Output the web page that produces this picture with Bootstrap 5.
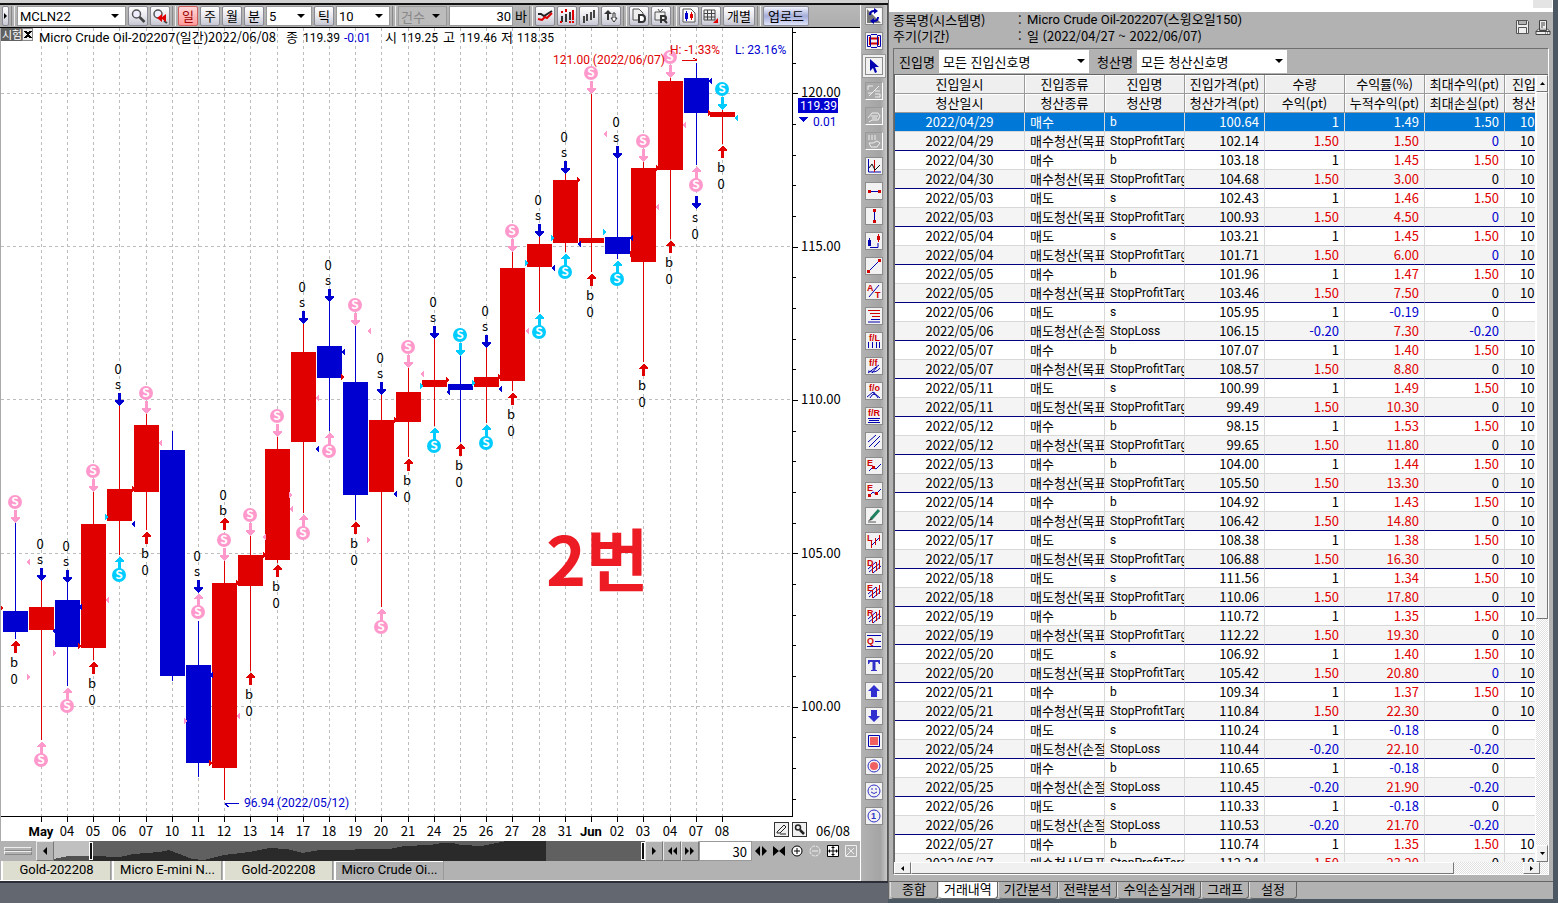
<!DOCTYPE html>
<html lang="ko">
<head>
<meta charset="utf-8">
<meta name="viewport" content="width=device-width, initial-scale=1">
<title>Micro Crude Oil-202207</title>
<link href="https://cdn.jsdelivr.net/npm/bootstrap@5.3.0/dist/css/bootstrap.min.css" rel="stylesheet">
<style>
:root { --face:#b2b2b2; --navy:#0000d0; --up:#e00000; }
body { font:13px/16px "Noto Sans CJK KR", sans-serif; color:#000; background:#636870; }
button, input, select { font:inherit; color:inherit; border-radius:0; }
.desk { display:grid; grid-template-columns:minmax(0,1fr) 670px; height:100vh; min-height:480px; overflow:hidden; }
.chart-win { background:var(--face); border-bottom:2px solid #2b2e36; margin-bottom:20px; min-height:0; }
.cap-edge { height:5px; background:#d0d0d0; border-bottom:2px solid #111; }
.toolbar { height:23px; gap:2px; padding:0 2px; border-bottom:1px solid #000; background:linear-gradient(#b8b8b8,#adadad); overflow:hidden; }
.tb { width:20px; height:20px; padding:0; border:1px solid #8a8a94; border-radius:2px; background:linear-gradient(#fff,#e8e8ee 50%,#c8c8d4); line-height:16px; display:flex; align-items:center; justify-content:center; flex:none; }
.tb.grip { width:7px; }
.tb.on { background:linear-gradient(#ffd8d8,#ff9a9a); border-color:#d06060; color:#a00000; }
.tb.wide { width:32px; }
.tb.upload { width:46px; background:linear-gradient(#f4f6ff,#a4acd8 50%,#dfe4fa); }
.sep { width:4px; height:20px; border-left:1px solid #888; border-right:1px solid #eee; flex:none; margin:0; }
.combo { appearance:none; height:20px; border:1px solid #999; padding:0 2px; line-height:17px; flex:none;
 background:#fff url("data:image/svg+xml,%3Csvg xmlns='http://www.w3.org/2000/svg' width='8' height='5'%3E%3Cpath d='M0 0h8l-4 4z'/%3E%3C/svg%3E") no-repeat right 6px center; }
.combo:disabled { background-color:#bcbcbc; color:#888; opacity:1; }
.latin { font-family:Roboto, "Noto Sans CJK KR", sans-serif; }
.num { height:20px; border:1px solid #999; padding:0 4px 0 2px; text-align:right; background:#fff; flex:none; min-width:0; }
.toolbar .num { padding-right:1px; }
.plot { border-left:1px solid #aaa; background:#fff; min-height:0; overflow:hidden; }
.plot svg { display:block; width:100%; height:100%; }
.plot .fig { font:12px Roboto, sans-serif; }
.plot .name { font:13px Roboto, "Noto Sans CJK KR", sans-serif; }
.navbar-mini { height:20px; flex:none; }
.grip-lines { width:36px; padding:6px 4px; }
.grip-lines i { display:block; height:4px; border:1px solid #eee; border-bottom-color:#888; border-right-color:#888; }
.nb { width:18px; height:20px; padding:0; border:1px solid #e8e8e8; border-right-color:#777; border-bottom-color:#777; background:var(--face); display:flex; align-items:center; justify-content:center; flex:none; }
.nb.flat { border:0; }
.charts { height:20px; flex:none; border-bottom:1px solid #fff; padding-left:1px; gap:1px; }
.charts a { width:110px; text-align:center; color:#000; text-decoration:none; background:#deded0; border-left:2px solid #fff; border-right:1px solid #999; line-height:18px; overflow:hidden; white-space:nowrap; }
.charts a.on { background:var(--face); box-shadow:inset 0 1px #fff; }
.strip { width:28px; flex:none; padding:2px 0 0 4px; gap:7px; border-left:1px solid #fff; border-right:1px solid #555; background:linear-gradient(90deg,#b2b2b2,#a4a4a4 75%,#c8c8c8); overflow:hidden; }
.strip button { width:18px; height:18px; padding:0; border:1px solid #707070; outline:1px solid #8c8c8c; outline-offset:-1px; background:#f2f2f2; display:block; flex:none; }
.strip button.off { background:#aaa; border-color:#999 #fff #fff #999; outline:0; }
.strip button.on { box-shadow:0 0 0 2px #f0f0f0, 0 0 0 3px #999; }
.strip svg { display:block; width:16px; height:16px; }
.strip text { font:bold 9px "Liberation Sans", sans-serif; }
.report { background:#4b5763; padding:0 5px 4px 0; min-height:0; }
.report-in { background:var(--face); min-height:0; border-left:1px solid #666; }
.title-strip { height:12px; background:#fff; flex:none; }
.title-strip span { width:19px; height:8px; margin-right:1px; background:#e4e4e4; }
.meta { padding:0 2px 4px 4px; flex:none; height:36px; }
.meta dl { display:grid; grid-template-columns:125px 9px 1fr; }
.meta dt, .meta dd { font-weight:400; margin:0; line-height:16px; white-space:nowrap; }
.frame { margin:0 4px 0 4px; border:1px solid; border-color:#707070 #fff #fff #707070; min-height:0; }
.filter { height:26px; padding:0 5px; flex:none; border-bottom:1px solid #666; }
.filter .combo { width:150px; height:23px; border:2px solid #fff; background-position:right 2px center; }
.filter label { width:40px; line-height:22px; white-space:nowrap; }
.grid-wrap { min-height:0; overflow:hidden; background:#fff; border-left:1px solid #666; }
.deals { width:640px; table-layout:fixed; border-collapse:separate; border-spacing:0; }
.deals th, .deals td { height:19px; padding:0 5px; line-height:18px; white-space:nowrap; overflow:hidden; border-right:1px solid #d8d8d8; border-bottom:1px solid #d8d8d8; }
.deals th { font-weight:400; text-align:center; padding:0; background:#efefef; border-color:#999; box-shadow:inset 1px 1px #fff; }
.deals th:last-child { text-align:left; padding-left:7px; }
.deals td:nth-child(n+4) { text-align:right; }
.deals td:first-child { text-align:center; padding:0; }
.deals td:nth-child(2) { padding-right:0; }
.deals td:nth-child(3) { padding-right:0; font-family:Roboto, sans-serif; font-size:12px; }
.deals td:last-child { text-align:left; padding:0 0 0 15px; }
.deals th:last-child, .deals td:last-child { border-right:0; }
.deals tr.exit td { background:#f4f4f4; border-bottom-color:#000080; }
.deals tr.sel td { background:#0078d7; color:#fff; }
.deals .r { color:#e00000; } .deals .l { color:#0000d0; }
.bar { background:repeating-conic-gradient(#fff 0 25%,#e0e0e0 0 50%) 0 0/2px 2px; flex:none; }
.bar.v { width:12px; } .bar.h { height:12px; }
.bar button, .bar .thumb { background:#f0f0f0; border:1px solid; border-color:#fff #777 #777 #fff; padding:0; flex:none; display:flex; align-items:center; justify-content:center; }
.bar.v button { height:17px; width:12px; } .bar.h button { width:17px; height:12px; }
.bar.v .thumb { height:67%; } .bar.h .thumb { width:83%; }
.sheets { height:18px; flex:none; margin-top:6px; padding-left:1px; border-top:1px solid #666; }
.sheets a { padding:0 5px; line-height:13px; height:17px; color:#000; text-decoration:none; border:1px solid #666; border-top:0; border-left-color:#ddd; border-radius:0 0 4px 4px; white-space:nowrap; text-align:center; }
.sheets a.short { padding:0 11px; }
.sheets a.on { background:#fff; }
</style>
</head>
<body>
<div class="desk">
 <div class="chart-win d-flex">
  <main class="d-flex flex-column flex-grow-1" style="min-width:0">
   <div class="cap-edge flex-shrink-0"></div>
   <div class="toolbar d-flex align-items-center flex-shrink-0">
    <button class="tb grip" aria-label="접기"><svg width="4" height="6"><path d="M0 0l3 3-3 3z"/></svg></button><i class="sep"></i>
    <select class="combo latin" style="width:109px" aria-label="종목"><option>MCLN22</option></select>
    <button class="tb" aria-label="검색"><svg width="16" height="16"><circle cx="6.500" cy="6" r="4" fill="#eef" stroke="#555" stroke-width="1.500"/><path d="M9.500 9l5 5" stroke="#444" stroke-width="2.500"/></svg></button>
    <button class="tb" aria-label="최근 검색"><svg width="16" height="16"><circle cx="6" cy="6" r="4" fill="#eef" stroke="#555" stroke-width="1.500"/><path d="M12 13l3 2" stroke="#444" stroke-width="2"/><path d="M5 10l5-4v3l4-3v8l-4-3v3z" fill="#e00000"/></svg></button><i class="sep"></i>
    <button class="tb on">일</button><button class="tb">주</button><button class="tb">월</button><button class="tb">분</button>
    <select class="combo latin" style="width:46px" aria-label="분 간격"><option>5</option></select>
    <button class="tb">틱</button>
    <select class="combo latin" style="width:54px" aria-label="틱 간격"><option>10</option></select><i class="sep"></i>
    <select class="combo" style="width:49px" disabled aria-label="건수"><option>건수</option></select>
    <input class="num latin" id="bars" style="width:64px" value="30"><label for="bars">바</label><i class="sep"></i>
    <button class="tb" aria-label="추세"><svg width="16" height="16" fill="none" stroke-width="2"><path d="M1 6h3l3 2 8-5" stroke="#222"/><path d="M1 11l4 1 3-3 2 1 5-5" stroke="#e00000"/></svg></button>
    <button class="tb" aria-label="캔들"><svg width="16" height="16" stroke-width="2"><path d="M3 8v6M7 6v8M11 4v8" stroke="#333"/><path d="M3 3v2M7 1v3M11 13v2M14 2v10M14 13v2M1 14h2" stroke="#e00000"/></svg></button>
    <button class="tb" aria-label="막대"><svg width="16" height="16" stroke-width="2"><path d="M3 8v7M6 6v7M10 4v8M13 2v8" stroke="#444"/></svg></button>
    <button class="tb" aria-label="정렬"><svg width="16" height="16"><path d="M1 6l4-4 4 4H6v6H4V6z" fill="#333"/><path d="M8 10h2V5h2v5h2l-3 4z" fill="#fff" stroke="#333"/></svg></button><i class="sep"></i>
    <button class="tb" aria-label="저장"><svg width="16" height="16"><path d="M2 1h6l4 4v7H2z" fill="#eee" stroke="#555"/><path d="M8 7h3q3 0 3 3.500T11 14H8z" fill="#fff" stroke="#333" stroke-width="2"/></svg></button>
    <button class="tb" aria-label="불러오기"><svg width="16" height="16"><path d="M2 4h10v8H2zM5 1l2 3 3-3" fill="#eee" stroke="#555"/><path d="M8 15V8h3q2 0 2 2t-2 2H8M11 12l3 3" fill="none" stroke="#333" stroke-width="2"/></svg></button><i class="sep"></i>
    <button class="tb" aria-label="차트 종류"><svg width="16" height="16"><path d="M2 1h8l4 4v9H2z" fill="#fff" stroke="#555"/><path d="M4 5h3v6H4zM5 3h1v10H5z" fill="#00c"/><path d="M9 6h3v4H9zM10 4h1v8h-1z" fill="#e00000"/></svg></button>
    <button class="tb" aria-label="표"><svg width="16" height="16"><path d="M1 2h11v10H1zM1 5.500h11M1 9h11M4.500 2v10M8.500 2v10" fill="none" stroke="#444"/><path d="M15 10v5h-5z" fill="#e00000"/></svg></button>
    <button class="tb wide">개별</button><i class="sep"></i><button class="tb upload">업로드</button>
   </div>
   <div class="plot flex-grow-1"><svg id="plot" viewBox="1 28 859 813" preserveAspectRatio="xMinYMin meet" role="img" aria-label="Micro Crude Oil-202207"></svg></div>
   <div class="navbar-mini d-flex">
    <div class="grip-lines"><i></i><i></i></div>
    <button class="nb" aria-label="이전"><svg width="6" height="8"><path d="M5 0v8L1 4z"/></svg></button>
    <svg class="flex-grow-1" style="min-width:0" height="20" viewBox="0 0 590 20" preserveAspectRatio="none" shape-rendering="crispEdges">
     <path fill="#606060" d="M0 0h590v20H0z"/>
     <path fill="#2a2a2a" d="M0 18l14-2 24-1 28 1 13-3 27-2 9-2 10 4 13 5 12 1 8-2 12-3 25-3 20-4 18 1 15 4 17-3 70-1 15-3 25-1 13-2h10l9 2 20 1 15-3 10-2h49v20H0z"/>
     <path fill="#606060" d="M491 0h95v20h-95z"/>
     <path fill="#c0c0c0" d="M0 0h36v15H14L0 18z"/><path fill="#505050" d="M14 15h22v5H0v-2z"/>
     <path fill="#111" stroke="#fff" d="M35.500 1.500h3v17h-3zM586.500 1.500h3v17h-3z"/>
    </svg>
    <button class="nb" aria-label="다음"><svg width="6" height="8"><path d="M1 0v8l4-4z"/></svg></button>
    <button class="nb" aria-label="뒤로"><svg width="10" height="8"><path d="M5 0v8L1 4zM10 0v8L6 4z"/></svg></button>
    <button class="nb" aria-label="앞으로"><svg width="10" height="8"><path d="M0 0v8l4-4zM5 0v8l4-4z"/></svg></button>
    <input class="num" style="width:53px" value="30" aria-label="봉 개수">
    <button class="nb flat" aria-label="넓게"><svg width="12" height="12"><path d="M5 1v10L0 6zM7 1v10l5-5z"/></svg></button>
    <button class="nb flat" aria-label="좁게"><svg width="12" height="12"><path d="M0 1v10l6-5zM12 1v10L6 6z"/></svg></button>
    <button class="nb flat" aria-label="확대"><svg width="12" height="12" fill="none" stroke="#000"><circle cx="6" cy="6" r="5" fill="#fff"/><path d="M3 6h6M6 3v6"/></svg></button>
    <button class="nb flat" aria-label="축소"><svg width="12" height="12" fill="none" stroke="#eee"><circle cx="6" cy="6" r="5" stroke-dasharray="3 1"/><path d="M3 6h6"/></svg></button>
    <button class="nb flat" aria-label="전체"><svg width="12" height="12" fill="none" stroke="#000"><path fill="#fff" d="M.5.5h11v11H.5z"/><path d="M1 6h10M6 1v10M4.500 2.500h3M4.500 9.500h3M2.500 4.500v3M9.500 4.500v3"/></svg></button>
    <button class="nb flat" aria-label="지우기"><svg width="12" height="12" fill="none" stroke="#eee"><path d="M.5.5h11v11H.5zM3 3l6 6M9 3l-8 8"/></svg></button>
   </div>
   <nav class="charts latin d-flex"><a href="#">Gold-202208</a><a href="#">Micro E-mini N...</a><a href="#">Gold-202208</a><a href="#" class="on">Micro Crude Oi...</a></nav>
  </main>
  <div class="d-flex flex-column flex-shrink-0"><div class="cap-edge"></div><div class="strip d-flex flex-column flex-grow-1" id="strip"></div></div>
 </div>

 <div class="report d-flex flex-column">
  <div class="report-in d-flex flex-column flex-grow-1">
   <div class="title-strip d-flex justify-content-end"><span></span></div>
   <div class="meta d-flex justify-content-between">
    <dl class="mb-0"><dt>종목명(시스템명)</dt><dd>:</dd><dd class="latin">Micro Crude Oil-202207(스윙오일150)</dd><dt>주기(기간)</dt><dd>:</dd><dd>일 (2022/04/27 ~ 2022/06/07)</dd></dl>
    <div class="d-flex gap-1 pt-2">
     <svg width="16" height="16" fill="#eee" stroke="#555"><path d="M1.500.5h11l1 1v12h-12zM3.500.5v4h8v-4M3.500 14V7.500h8V14"/></svg>
     <svg width="16" height="16" fill="#eee" stroke="#444"><path d="M4.500.5h7v10h-7zM6 3h4M6 5h4M6 7h2M4 8.500l-3 3v3h14v-3l-3-3M1 11.500h14M10 13h1M12 13h1"/></svg>
    </div>
   </div>
   <div class="frame d-flex flex-column flex-grow-1">
    <div class="filter d-flex align-items-center">
     <label for="in">진입명</label><select id="in" class="combo me-2"><option>모든 진입신호명</option></select>
     <label for="out">청산명</label><select id="out" class="combo"><option>모든 청산신호명</option></select>
    </div>
    <div class="d-flex flex-grow-1" style="min-height:0">
     <div class="grid-wrap flex-grow-1">
      <table class="deals">
       <colgroup><col style="width:130px"><col style="width:80px"><col style="width:80px"><col style="width:80px"><col style="width:80px"><col style="width:80px"><col style="width:80px"><col style="width:30px"></colgroup>
       <thead><tr><th>진입일시</th><th>진입종류</th><th>진입명</th><th>진입가격(pt)</th><th>수량</th><th>수익률(%)</th><th>최대수익(pt)</th><th>진입</th></tr>
       <tr><th>청산일시</th><th>청산종류</th><th>청산명</th><th>청산가격(pt)</th><th>수익(pt)</th><th>누적수익(pt)</th><th>최대손실(pt)</th><th>청산</th></tr></thead>
       <tbody id="rows"></tbody>
      </table>
     </div>
     <div class="bar v d-flex flex-column"><button aria-label="위로"><svg width="5" height="3"><path d="M0 3h5L2.500 0z"/></svg></button><div class="thumb"></div><button class="mt-auto" aria-label="아래로"><svg width="5" height="3"><path d="M0 0h5L2.500 3z"/></svg></button></div>
    </div>
    <div class="bar h d-flex"><button aria-label="왼쪽"><svg width="3" height="5"><path d="M3 0v5L0 2.500z"/></svg></button><div class="thumb"></div><button class="ms-auto me-2" aria-label="오른쪽"><svg width="3" height="5"><path d="M0 0v5l3-2.500z"/></svg></button></div>
   </div>
   <nav class="sheets d-flex"><a href="#" class="short">종합</a><a href="#" class="on">거래내역</a><a href="#">기간분석</a><a href="#">전략분석</a><a href="#">수익손실거래</a><a href="#">그래프</a><a href="#" class="short">설정</a></nav>
  </div>
 </div>
</div>

<script>
/* trade list: month/day, side, entry, exit, return %, cumulative, stopped out */
const deals = [
['04/29','b','100.64','102.14','1.49','1.50'],['04/30','b','103.18','104.68','1.45','3.00'],['05/03','s','102.43','100.93','1.46','4.50'],
['05/04','s','103.21','101.71','1.45','6.00'],['05/05','b','101.96','103.46','1.47','7.50'],['05/06','s','105.95','106.15','-0.19','7.30',1],
['05/07','b','107.07','108.57','1.40','8.80'],['05/11','s','100.99','99.49','1.49','10.30'],['05/12','b','98.15','99.65','1.53','11.80'],
['05/13','b','104.00','105.50','1.44','13.30'],['05/14','b','104.92','106.42','1.43','14.80'],['05/17','s','108.38','106.88','1.38','16.30'],
['05/18','s','111.56','110.06','1.34','17.80'],['05/19','b','110.72','112.22','1.35','19.30'],['05/20','s','106.92','105.42','1.40','20.80'],
['05/21','b','109.34','110.84','1.37','22.30'],['05/24','s','110.24','110.44','-0.18','22.10',1],['05/25','b','110.65','110.45','-0.18','21.90',1],
['05/26','s','110.33','110.53','-0.18','21.70',1],['05/27','b','110.74','112.24','1.35','23.20']];
const blueZero = ['04/29','05/03','05/04','05/20'];
document.getElementById('rows').innerHTML = deals.map(([d,s,a,z,r,c,stop],i) => {
  const side = s==='b' ? '매수' : '매도', t = stop ? '' : '10', tone = stop ? 'l' : 'r';
  return `<tr class="${i?'':'sel'}"><td>2022/${d}</td><td>${side}</td><td>${s}</td><td>${a}</td><td>1</td><td class="${i?tone:''}">${r}</td><td class="${i&&!stop?'r':''}">${stop?'0':'1.50'}</td><td>${t}</td></tr>`+
  `<tr class="exit"><td>2022/${d}</td><td>${side}청산(${stop?'손절':'목표'})</td><td>${stop?'StopLoss':'StopProfitTarget'}</td><td>${z}</td><td class="${tone}">${stop?'-0.20':'1.50'}</td><td class="r">${c}</td><td class="${stop||blueZero.includes(d)?'l':''}">${stop?'-0.20':'0'}</td><td>${t}</td></tr>`;
}).join('');

/* candles: x, unused, body top/bottom, high, low, label, signals, colour */
const R='#e00000', B='#0000d0', P='#ff99cc', C='#00ccff';
const candles = [
[15,1,611,632,523,639,'','PD502 RU641',B],[41,0,607,630,581,740,'May','BD580 PU760',R],[67,0,600,647,583,686,'04','BD582 PU706',B],
[93,0,524,648,492,660,'05','PD471 RU662',R],[119,0,489,521,406,555,'06','BD405 CU575',R],[146,0,425,492,414,530,'07','PD393 RU532',R],
[172,0,450,676,431,681,'10','',B],[198,0,665,763,621,777,'11','BD592 PU612',B],[224,0,583,768,561,800,'12','RT518 PD540',R],
[250,0,555,586,536,671,'13','PD515 RU673',R],[277,0,449,560,437,563,'14','PD416 RU565',R],[303,0,352,442,324,513,'17','BD323 PU533',R],
[329,0,346,378,302,431,'18','BD301 PU451',B],[355,0,382,495,326,520,'19','PD305 RU522',B],[381,0,420,492,395,607,'20','BD394 PU627',R],
[408,0,392,422,368,457,'21','PD347 RU459',R],[434,0,380,387,339,426,'24','BD338 CU446',R],[460,0,384,390,356,442,'25','CD335 RU444',B],
[486,0,377,387,348,423,'26','BD347 CU443',R],[512,0,268,381,252,391,'27','PD231 RU393',R],[539,0,244,267,237,312,'28','BD236 CU332',R],
[565,0,180,243,174,252,'31','BD173 CU272',R],[591,0,238,243,94,272,'Jun','PD73 RU274',R],[617,0,237,254,159,259,'02','BD158 CU279',B],
[643,0,168,262,162,362,'03','PD141 RU364',R],[670,0,81,170,78,239,'04','PD57 RU241',R],[696,0,78,113,63,165,'07','PU185 BB208',B],
[722,0,112,117,110,144,'08','CD89 RU146',R]];
const txt=(x,y,s,f='#000',a='start',e='')=>`<text x="${x}" y="${y}" fill="${f}" text-anchor="${a}" ${e}>${s}</text>`;
const fig=(x,y,s,f='#000')=>txt(x,y,s,f,'start','class="fig"');
const down=(x,t,f)=>`<path fill="${f}" d="M${x-1} ${t-12}h3v7h3v1l-4 5h-1l-4-5v-1h3z"/>`;
const up=(x,t,f)=>`<path fill="${f}" d="M${x-1} ${t+12}h3v-7h3v-1l-4-4h-1l-4 4v1h3z"/>`;
const ball=(x,y,f)=>`<circle cx="${x}" cy="${y}" r="7" fill="${f}" shape-rendering="auto"/>`+txt(x,y+4,'S','#fff','middle','font-size="12" font-weight="700"');
const draw={
 PD:(x,y)=>down(x,y+20,P)+ball(x,y,P), CD:(x,y)=>down(x,y+20,C)+ball(x,y,C),
 PU:(x,y)=>up(x,y-18,P)+ball(x,y,P), CU:(x,y)=>up(x,y-18,C)+ball(x,y,C),
 BD:(x,t)=>down(x,t,B)+txt(x-1,t-16,'s','#000','middle')+txt(x-1,t-31,'0','#000','middle'),
 RU:(x,t)=>up(x,t,R)+txt(x-1,t+26,'b','#000','middle')+txt(x-1,t+43,'0','#000','middle'),
 RT:(x,t)=>up(x,t,R)+txt(x-1,t-3,'b','#000','middle')+txt(x-1,t-18,'0','#000','middle'),
 BB:(x,t)=>down(x,t,B)+txt(x-1,t+14,'s','#000','middle')+txt(x-1,t+31,'0','#000','middle')};
/* small order-price flags: side, colour, x, y */
const flags=`rR1,608 lP28,562 lB54,631 rP54,653 rP28,677 lB80,607 rR79,646 lP107,600 rC106,517 rR133,489 lB133,524 lP160,443 rP185,721 lB211,675 rR210,763 lP238,716 rR237,583 lP264,537 rR264,555 rP290,495 lP291,509 lP317,398 lB317,449 lB343,352 rR342,377 lP369,331 rP368,540 rR395,420 lB395,494 lP422,374 rC421,386 rR447,380 lB448,392 rC473,383 rR499,377 lB500,389 lP527,331 rC526,263 rC552,238 lB553,268 rR578,180 lB579,244 lP605,134 rC604,232 lB631,238 rR631,254 lP657,207 rR657,168 lP684,125 rR709,113 lB710,81 lC736,118`;
const col={R,B,P,C};
let g='<g shape-rendering="crispEdges" font-size="13">';
for(const y of [93,246,399,553,706]) g+=`<path d="M1 ${y}.500H792" stroke="#bcbcbc" stroke-dasharray="3 3"/>`;
for(const c of candles.slice(1)) g+=`<path d="M${c[0]}.500 28V816" stroke="#bcbcbc" stroke-dasharray="3 3"/><path d="M${c[0]}.500 816v6" stroke="#000"/>`;
g+='<path d="M792.500 28V816.500H1" fill="none" stroke="#000"/>';
for(let i=0;i<26;i++){const y=Math.round(32+i*30.66);g+=`<path d="M793 ${y}.500h${i%5===2?5:3}" stroke="#000"/>`;}
[['120.00',97],['115.00',251],['110.00',404],['105.00',558],['100.00',711]].forEach(([s,y])=>g+=txt(801,y,s));
g+=`<path d="M798 98h40v15h-40z" fill="${B}"/>`+fig(800,110,'119.39','#fff')+`<path d="M799 117h9l-4 5h-1z" fill="${B}"/>`+fig(813,126,'0.01',B);
for(const [x,,t,b,h,l,name,sig,f] of candles){
 g+=`<path d="M${x}.500 ${h}V${l}" stroke="${f}"/><path d="M${x-12} ${t}h25V${b}h-25z" fill="${f}"/>`;
 if(name) g+=txt(x,836,name,'#000','middle',/[A-Z]/.test(name)?'class="name" style="font-weight:700"':'');
}
for(const m of flags.split(' ')){const [,s,k,x,y]=m.match(/(.)(.)(\d+),(\d+)/);g+=s==='r'?`<path fill="${col[k]}" d="M${x-1} ${y-3}l4 3-4 3z"/>`:`<path fill="${col[k]}" d="M${+x+2} ${y-3}l-4 3 4 3z"/>`;}
for(const c of candles) for(const s of c[7].split(' ')) if(s) g+=draw[s.slice(0,2)](c[0],+s.slice(2));
g+=fig(553,64,'121.00 (2022/06/07)',R)+fig(670,54,'H: -1.33%',R)+fig(735,54,'L: 23.16%',B)+fig(244,807,'96.94 (2022/05/12)',B);
g+=`<path d="M682 60.500h15M693 58l4 2" stroke="${R}"/><path d="M239 803.500h-14M229 807l-4-3" stroke="${B}"/>`;
g+='<path d="M1 28h21v13H1z" fill="#606060"/><path d="M22.500 28.500h10v12h-10z" fill="#eee" stroke="#888"/><path d="M25 31l6 7M31 31l-6 7" stroke="#000" stroke-width="2"/>'+txt(2,39,'시험','#fff','start','font-size="11"');
g+=txt(39,42,'Micro Crude Oil-202207(일간)','#000','start','class="name"')+txt(208,42,'2022/06/08')+txt(286,42,'종')+fig(303,42,'119.39')+fig(344,42,'-0.01',B)+txt(385,42,'시')+fig(401,42,'119.25')+txt(443,42,'고')+fig(460,42,'119.46')+txt(501,42,'저')+fig(517,42,'118.35');
g+=txt(546,586,'2번','#ed1c24','start','font-size="68" font-weight="700"');
g+='<path d="M774.500 822.500h14v14h-14zM792.500 822.500h14v14h-14z" fill="#f0f0f0" stroke="#333"/><g fill="none" stroke="#222" shape-rendering="auto"><path d="M777 832l7-7 2 2-6 6h-3zM780 834h6"/><circle cx="798" cy="827.500" r="2.500" stroke-width="1.500"/><path d="M800 830l4 4" stroke-width="2.500"/></g>'+txt(816,836,'06/08');
document.getElementById('plot').innerHTML=g+'</g>';

/* drawing tools */
const n='#0000b0', p=(d,f=n,w=1)=>`<path d="${d}" fill="none" stroke="${f}" stroke-width="${w}"/>`, q=(d,f=n)=>`<path d="${d}" fill="${f}"/>`, w=(x,y,s,f='#d00000')=>`<text x="${x}" y="${y}" fill="${f}">${s}</text>`;
const sq=(x,y)=>q(`M${x} ${y}h3v3h-3z`,'#d00000');
const hatch=p('M3 14L14 5M7 15l8-7M2 11l8-7')+p('M6.500 7v8M10.500 4v9M13.500 2v9','#d00000');
const tools=[
['새로고침',q('M1 1h14v14z','#fff')+q('M1 1l14 14H1z','#777')+p('M4 7q0-4 4-4M12 9q0 4-4 4',n,2)+q('M8 0l4 3-4 3zM8 10l-4 3 4 3z')],
['연결',p('M1.500 2.500h3v11h-3zM11.500 2.500h3v11h-3zM5 1.500h6M5 14.500h6')+p('M5 5.500h6M5 10.500h6','#d00000',2)+q('M3 4h1v8H3zM12 4h1v8h-1z','#d00000')],
['선택',q('M4 1v12l3-3 2 5 2-1-2-5h4z'),'on'],
['수정',p('M2 7V3h5M3 13L13 3M9 8h5M9 11h5v3H9M2 10h4','#eee'),'off'],
['이동',p('M2 10l4-5h6l2 3-2 4H6l-3 2M5 8h7M6 10h5','#eee'),'off'],
['손',p('M3 2v5M6 2v5M9 2v5M3 10h4l4-2 3 2-3 4H5z','#eee'),'off'],
['수직선',p('M2.500 1v13H15')+p('M8.500 2v12','#d00000')+p('M3 10l3-4 3 6 5-5','#111')],
['수평선',p('M4 8.500h9')+sq(2,7)+sq(12,7)],
['수직 구간',p('M8.500 3v10')+sq(7,1)+sq(7,12)],
['측정',q('M2 7h3v6H2zM3 5h1v2H3z')+q('M11 3h3v4h-3zM12 1h1v8h-1z','#d00000')+p('M4 14.500h8V10')],
['추세선',p('M3 13L13 3')+sq(1,12)+sq(12,1)],
['각도',w(1,8,'A')+w(9,15,'T')+p('M3 14L13 2')],
['되돌림',p('M2 2.500h12M4 5.500h10M6 8.500h8','#d00000')+p('M5 11.500h9M2 14h12')],
['피보 선',w(3,8,'f/L')+p('M2.500 9v6M6.500 9v6M10.500 9v6M13.500 9v6')],
['피보 팬',w(3,8,'f/f')+p('M2 15l11-8M2 13q8 3 12-3M6 15l5-6')],
['피보 원',w(3,8,'f/o')+p('M1 14l6-5 7 6M4 15q4-8 8 0M8 9v3')],
['피보 R',w(2,8,'f/R')+p('M2 10.500h12M3 12.500h10M2 14.500h12')],
['평행선',p('M2 9l8-7M3 14L14 3M8 14l6-6')],
['엘리엇 1',w(1,8,'E')+p('M3 13l4-4 3 2 5-5')+sq(6,8)],
['엘리엇 2',w(1,8,'E')+p('M3 13l4-4 3 2 5-5')+sq(2,11)+sq(9,9)],
['펜',p('M5 11l8-9','#208060',3)+p('M2 14h8','#555')+q('M2 13l3-3 1 2z','#333')],
['L 채널',w(1,8,'L')+p('M5 13l9-9')+p('M5.500 8v7M9.500 5v7M13.500 2v6','#d00000')],
['D 채널',hatch+w(1,8,'D')],['E 채널',hatch+w(1,8,'E')],['R 채널',hatch+w(1,8,'R')],
['Q',p('M1 2.500h14M9 8.500h6M1 13.500h14')+w(1,11,'Q')],
['문자',q('M2 2h12v4h-1l-1-2H9.500v8H11v1H5v-1h1.500V4H4L3 6H2z','#3030c8')],
['위 화살표',q('M8 2l6 6h-3v6H5V8H2z','#3030d0')],['아래 화살표',q('M8 14l6-6h-3V2H5v6H2z','#3030d0')],
['사각형',p('M2.500 2.500h11v11h-11z')+q('M4 4h8v8H4z','#f06060')],
['원','<circle cx="8" cy="8" r="6" fill="none" stroke="#3030c8"/><circle cx="8" cy="8" r="4" fill="#f06060"/>'],
['얼굴','<circle cx="8" cy="8" r="6" fill="none" stroke="#3030c8"/>'+p('M6 5v2M10 5v2M5 9q3 3 6 0','#3030c8')],
['번호','<circle cx="8" cy="8" r="6" fill="none" stroke="#3030c8"/><text x="5" y="11" fill="#3030c8">1</text>']];
document.getElementById('strip').innerHTML=tools.map(t=>`<button class="${t[2]||''}" aria-label="${t[0]}"><svg viewBox="0 0 16 16">${t[1]}</svg></button>`).join('');
</script>
</body>
</html>
